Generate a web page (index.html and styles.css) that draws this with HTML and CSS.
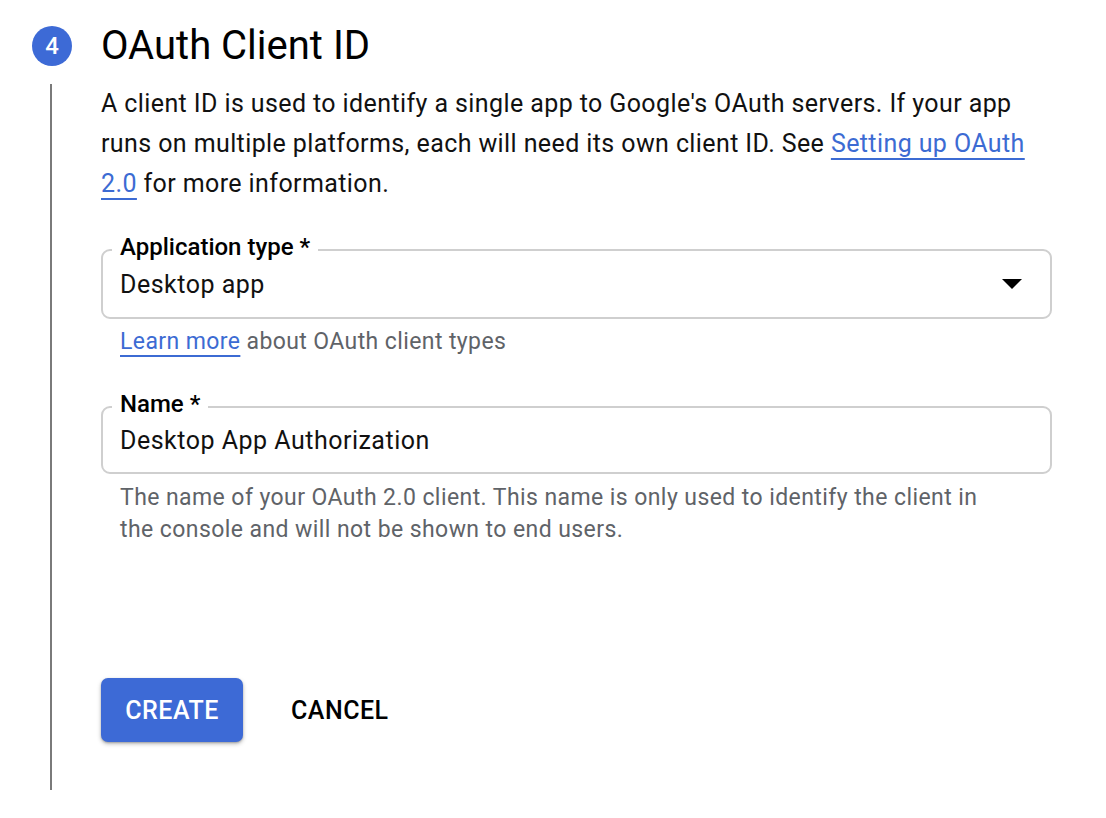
FILE: index.html
```html
<!DOCTYPE html>
<html>
<head>
<meta charset="utf-8">
<link rel="stylesheet" href="styles.css">
</head>
<body>
<div class="step">
  <div class="step-head">
    <div class="badge">4</div>
    <h1 class="title">OAuth Client ID</h1>
  </div>
  <div class="step-body">
    <div class="rail"><div class="rail-line"></div></div>
    <div class="content">
      <p class="intro">A client ID is used to identify a single app to Google's OAuth servers. If your app runs on multiple platforms, each will need its own client ID. See <a class="link" href="#">Setting up OAuth 2.0</a> for more information.</p>

      <div class="field">
        <span class="field-label">Application type *</span>
        <div class="field-box select">
          <span class="field-value">Desktop app</span>
          <svg class="caret" width="20" height="10" viewBox="0 0 20 10"><path d="M0 0 L20 0 L10 10 Z" fill="#000"/></svg>
        </div>
      </div>
      <div class="hint"><a class="link" href="#">Learn more</a> about OAuth client types</div>

      <div class="field field-name">
        <span class="field-label">Name *</span>
        <div class="field-box">
          <span class="field-value">Desktop App Authorization</span>
        </div>
      </div>
      <div class="hint hint-small">The name of your OAuth 2.0 client. This name is only used to identify the client in the console and will not be shown to end users.</div>

      <div class="actions">
        <button class="btn btn-primary">CREATE</button>
        <button class="btn btn-text">CANCEL</button>
      </div>
    </div>
  </div>
</div>
</body>
</html>
```
FILE: styles.css
```css
* { box-sizing: border-box; }
html, body { margin: 0; padding: 0; background: #fff; }
body {
  font-family: Roboto, "Noto Sans", Arial, sans-serif;
  color: #202124;
  width: 1106px;
  height: 818px;
  overflow: hidden;
}
.step { padding: 26px 0 0 32px; }
.step-head {
  display: flex;
  align-items: center;
  gap: 29px;
  height: 40px;
}
.badge {
  width: 40px;
  height: 40px;
  border-radius: 50%;
  background: #3d6ad6;
  color: #fff;
  font-size: 24px;
  font-weight: 500;
  display: flex;
  align-items: center;
  justify-content: center;
}
.title {
  margin: 0;
  font-size: 40px;
  font-weight: 400;
  color: #000;
  line-height: 40px;
}
.step-body {
  display: flex;
  margin-top: 18px;
}
.rail {
  width: 69px;
  flex: none;
  padding-left: 18px;
}
.rail-line {
  width: 2px;
  height: 706px;
  background: #7a7a7a;
}
.content { width: 951px; }
.intro {
  margin: 0;
  font-size: 25px;
  letter-spacing: 0.4px;
  line-height: 40px;
  color: #111;
}
.link {
  color: #3c6bd3;
  text-decoration: underline;
  text-decoration-thickness: 2px;
  text-underline-offset: 6px;
}
.field {
  position: relative;
  margin-top: 45px;
}
.field-name { margin-top: 49px; }
.field-label {
  position: absolute;
  left: 11px;
  top: -18px;
  background: #fff;
  padding: 0 8px;
  font-size: 24px;
  font-weight: 500;
  line-height: 32px;
  color: #000;
}
.field-box {
  height: 70px;
  border: 2px solid #cfcfcf;
  border-radius: 9px;
  display: flex;
  align-items: center;
  justify-content: space-between;
  padding: 0 28px 0 17px;
}
.field-name .field-box { height: 68px; }
.field-value {
  font-size: 25px;
  letter-spacing: 0.5px;
  color: #111;
}
.hint {
  margin-top: 8px;
  padding-left: 19px;
  font-size: 23px;
  letter-spacing: 0.4px;
  line-height: 30px;
  color: #5f6368;
}
.hint-small {
  margin-top: 8px;
  font-size: 23px;
  letter-spacing: 0.42px;
  line-height: 32px;
  padding-right: 50px;
}
.actions {
  display: flex;
  align-items: center;
  gap: 24px;
  margin-top: 132px;
}
.btn {
  font-family: Roboto, "Noto Sans", Arial, sans-serif;
  font-size: 25px;
  font-weight: 500;
  letter-spacing: 0.5px;
  border: none;
  background: none;
  cursor: pointer;
}
.btn-primary {
  height: 64px;
  width: 142px;
  background: #3d6ad6;
  color: #fff;
  border-radius: 7px;
  box-shadow: 0 2px 4px rgba(0,0,0,0.25), 0 1px 2px rgba(0,0,0,0.2);
}
.btn-text {
  color: #000;
  padding: 0 24px;
  height: 64px;
}
```
